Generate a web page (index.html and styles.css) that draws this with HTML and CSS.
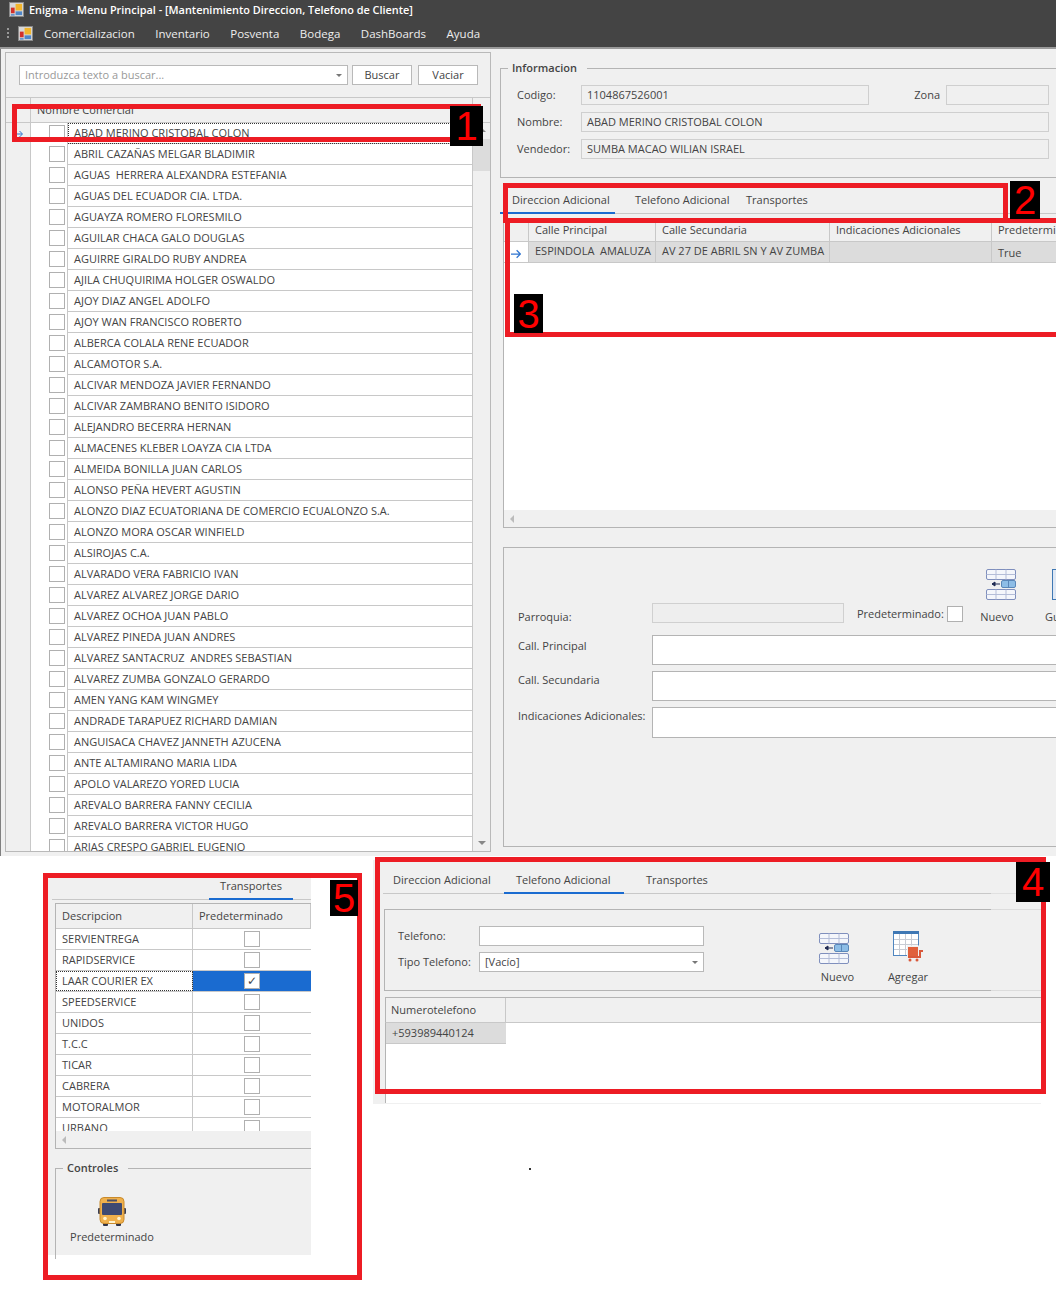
FILE: index.html
```html
<!DOCTYPE html>
<html lang="es">
<head>
  <meta charset="UTF-8">
  <title>Enigma - Menu Principal</title>
  <link rel="stylesheet" href="styles.css">
</head>
<body>
  <svg class="sprites" width="0" height="0">
    <defs>
      <symbol id="logo" viewBox="0 0 16 16">
        <rect x="0.5" y="0.5" width="15" height="15" fill="#d8d8d8" stroke="#8a8a8a"/>
        <rect x="2" y="6" width="4" height="6" fill="#d2302a"/>
        <rect x="7" y="2" width="7" height="7" fill="#f2b52c"/>
        <rect x="7" y="10" width="7" height="4" fill="#4f86c8"/>
        <rect x="2" y="13" width="4" height="1.5" fill="#4f86c8"/>
      </symbol>
      <symbol id="nuevo" viewBox="0 0 30 31">
        <g fill="#f4f6fb" stroke="#7f8fbd">
          <rect x="0.5" y="0.5" width="29" height="10" rx="1.5"/>
          <rect x="0.5" y="20.5" width="29" height="10" rx="1.5"/>
          <path d="M0.5 5.5h29M10 0.5v10M20 0.5v10M0.5 25.5h29M10 20.5v10M20 20.5v10" fill="none" stroke="#b4bdd8"/>
        </g>
        <rect x="15.5" y="11.5" width="14" height="7" rx="1.5" fill="#8dbde6" stroke="#5b87b8"/>
        <path d="M22.5 11.5v7" stroke="#5b87b8"/>
        <path d="M14 15h-8M9 13l-3 2 3 2z" fill="#1f2b52" stroke="#1f2b52"/>
      </symbol>
      <symbol id="agregar" viewBox="0 0 30 31">
        <rect x="0.5" y="1.5" width="25" height="23" fill="#fff" stroke="#4f86c0"/>
        <rect x="0" y="0" width="26" height="3" fill="#3f78b4"/>
        <path d="M6.5 3v21M12.5 3v21M18.5 3v21M1 8.500h24M1 13.500h24M1 18.500h24" stroke="#c8ccd4" fill="none"/>
        <rect x="14" y="14.500" width="13" height="11" fill="#f0f0f0"/>
        <rect x="15" y="16" width="10" height="9" fill="#e0603c"/>
        <path d="M15 26h12v-6h3" fill="none" stroke="#d9583a" stroke-width="2"/>
        <circle cx="17" cy="29" r="1.500" fill="#d9583a"/>
        <circle cx="24" cy="29" r="1.500" fill="#d9583a"/>
      </symbol>
      <symbol id="bus" viewBox="0 0 28 29">
        <rect x="0" y="11" width="3" height="6" rx="1" fill="#3a3f55"/>
        <rect x="25" y="11" width="3" height="6" rx="1" fill="#3a3f55"/>
        <rect x="5" y="24" width="5" height="5" rx="1" fill="#2f3346"/>
        <rect x="18" y="24" width="5" height="5" rx="1" fill="#2f3346"/>
        <rect x="2" y="0.500" width="24" height="26" rx="4" fill="#efb04c" stroke="#c98a2c"/>
        <rect x="9" y="2.500" width="10" height="2" fill="#4a4f66"/>
        <rect x="4" y="6" width="20" height="12" rx="1" fill="#3e4a72"/>
        <circle cx="7" cy="21.500" r="1.800" fill="#fff3cf"/>
        <circle cx="21" cy="21.500" r="1.800" fill="#fff3cf"/>
        <rect x="11" y="24" width="6" height="2" fill="#fff3cf"/>
      </symbol>
      <symbol id="arrow" viewBox="0 0 8 8">
        <path d="M0 4h7M4.500 1l3 3-3 3" fill="none" stroke="#2f74d0"/>
      </symbol>
    </defs>
  </svg>

  <div class="app">
    <div class="titlebar">
      <svg class="logo"><use href="#logo"/></svg>
      <span>Enigma - Menu Principal - [Mantenimiento Direccion, Telefono de Cliente]</span>
    </div>
    <div class="menubar">
      <span class="grip"></span>
      <svg class="logo"><use href="#logo"/></svg>
      <nav class="menu">
        <span>Comercializacion</span>
        <span>Inventario</span>
        <span>Posventa</span>
        <span>Bodega</span>
        <span>DashBoards</span>
        <span>Ayuda</span>
      </nav>
    </div>

    <div class="workspace">
      <section class="left-panel">
        <div class="search-row">
          <div class="combo search-combo"><span class="placeholder">Introduzca texto a buscar...</span><i class="caret"></i></div>
          <button class="btn btn-buscar">Buscar</button>
          <button class="btn">Vaciar</button>
        </div>
        <div class="list-head">
          <div class="list-head-marker"></div>
          <div class="list-head-name">Nombre Comercial</div>
        </div>
        <div class="list-body">
          <div class="list-rows">
            <div class="list-row is-current"><div class="marker"><svg class="arrow"><use href="#arrow"/></svg></div><div class="check-cell"><i class="check"></i></div><div class="name">ABAD MERINO CRISTOBAL COLON</div></div>
            <div class="list-row"><div class="marker"></div><div class="check-cell"><i class="check"></i></div><div class="name">ABRIL CAZAÑAS MELGAR BLADIMIR</div></div>
            <div class="list-row"><div class="marker"></div><div class="check-cell"><i class="check"></i></div><div class="name">AGUAS&nbsp; HERRERA ALEXANDRA ESTEFANIA</div></div>
            <div class="list-row"><div class="marker"></div><div class="check-cell"><i class="check"></i></div><div class="name">AGUAS DEL ECUADOR CIA. LTDA.</div></div>
            <div class="list-row"><div class="marker"></div><div class="check-cell"><i class="check"></i></div><div class="name">AGUAYZA ROMERO FLORESMILO</div></div>
            <div class="list-row"><div class="marker"></div><div class="check-cell"><i class="check"></i></div><div class="name">AGUILAR CHACA GALO DOUGLAS</div></div>
            <div class="list-row"><div class="marker"></div><div class="check-cell"><i class="check"></i></div><div class="name">AGUIRRE GIRALDO RUBY ANDREA</div></div>
            <div class="list-row"><div class="marker"></div><div class="check-cell"><i class="check"></i></div><div class="name">AJILA CHUQUIRIMA HOLGER OSWALDO</div></div>
            <div class="list-row"><div class="marker"></div><div class="check-cell"><i class="check"></i></div><div class="name">AJOY DIAZ ANGEL ADOLFO</div></div>
            <div class="list-row"><div class="marker"></div><div class="check-cell"><i class="check"></i></div><div class="name">AJOY WAN FRANCISCO ROBERTO</div></div>
            <div class="list-row"><div class="marker"></div><div class="check-cell"><i class="check"></i></div><div class="name">ALBERCA COLALA RENE ECUADOR</div></div>
            <div class="list-row"><div class="marker"></div><div class="check-cell"><i class="check"></i></div><div class="name">ALCAMOTOR S.A.</div></div>
            <div class="list-row"><div class="marker"></div><div class="check-cell"><i class="check"></i></div><div class="name">ALCIVAR MENDOZA JAVIER FERNANDO</div></div>
            <div class="list-row"><div class="marker"></div><div class="check-cell"><i class="check"></i></div><div class="name">ALCIVAR ZAMBRANO BENITO ISIDORO</div></div>
            <div class="list-row"><div class="marker"></div><div class="check-cell"><i class="check"></i></div><div class="name">ALEJANDRO BECERRA HERNAN</div></div>
            <div class="list-row"><div class="marker"></div><div class="check-cell"><i class="check"></i></div><div class="name">ALMACENES KLEBER LOAYZA CIA LTDA</div></div>
            <div class="list-row"><div class="marker"></div><div class="check-cell"><i class="check"></i></div><div class="name">ALMEIDA BONILLA JUAN CARLOS</div></div>
            <div class="list-row"><div class="marker"></div><div class="check-cell"><i class="check"></i></div><div class="name">ALONSO PEÑA HEVERT AGUSTIN</div></div>
            <div class="list-row"><div class="marker"></div><div class="check-cell"><i class="check"></i></div><div class="name">ALONZO DIAZ ECUATORIANA DE COMERCIO ECUALONZO S.A.</div></div>
            <div class="list-row"><div class="marker"></div><div class="check-cell"><i class="check"></i></div><div class="name">ALONZO MORA OSCAR WINFIELD</div></div>
            <div class="list-row"><div class="marker"></div><div class="check-cell"><i class="check"></i></div><div class="name">ALSIROJAS C.A.</div></div>
            <div class="list-row"><div class="marker"></div><div class="check-cell"><i class="check"></i></div><div class="name">ALVARADO VERA FABRICIO IVAN</div></div>
            <div class="list-row"><div class="marker"></div><div class="check-cell"><i class="check"></i></div><div class="name">ALVAREZ ALVAREZ JORGE DARIO</div></div>
            <div class="list-row"><div class="marker"></div><div class="check-cell"><i class="check"></i></div><div class="name">ALVAREZ OCHOA JUAN PABLO</div></div>
            <div class="list-row"><div class="marker"></div><div class="check-cell"><i class="check"></i></div><div class="name">ALVAREZ PINEDA JUAN ANDRES</div></div>
            <div class="list-row"><div class="marker"></div><div class="check-cell"><i class="check"></i></div><div class="name">ALVAREZ SANTACRUZ&nbsp; ANDRES SEBASTIAN</div></div>
            <div class="list-row"><div class="marker"></div><div class="check-cell"><i class="check"></i></div><div class="name">ALVAREZ ZUMBA GONZALO GERARDO</div></div>
            <div class="list-row"><div class="marker"></div><div class="check-cell"><i class="check"></i></div><div class="name">AMEN YANG KAM WINGMEY</div></div>
            <div class="list-row"><div class="marker"></div><div class="check-cell"><i class="check"></i></div><div class="name">ANDRADE TARAPUEZ RICHARD DAMIAN</div></div>
            <div class="list-row"><div class="marker"></div><div class="check-cell"><i class="check"></i></div><div class="name">ANGUISACA CHAVEZ JANNETH AZUCENA</div></div>
            <div class="list-row"><div class="marker"></div><div class="check-cell"><i class="check"></i></div><div class="name">ANTE ALTAMIRANO MARIA LIDA</div></div>
            <div class="list-row"><div class="marker"></div><div class="check-cell"><i class="check"></i></div><div class="name">APOLO VALAREZO YORED LUCIA</div></div>
            <div class="list-row"><div class="marker"></div><div class="check-cell"><i class="check"></i></div><div class="name">AREVALO BARRERA FANNY CECILIA</div></div>
            <div class="list-row"><div class="marker"></div><div class="check-cell"><i class="check"></i></div><div class="name">AREVALO BARRERA VICTOR HUGO</div></div>
            <div class="list-row"><div class="marker"></div><div class="check-cell"><i class="check"></i></div><div class="name">ARIAS CRESPO GABRIEL EUGENIO</div></div>
          </div>
          <div class="vscroll">
            <i class="tri tri-up"></i>
            <div class="vscroll-thumb"></div>
            <i class="tri tri-down"></i>
          </div>
        </div>
      </section>

      <section class="right-panel">
        <fieldset class="info-group">
          <legend>Informacion</legend>
          <div class="info-row">
            <label>Codigo:</label>
            <div class="ro-field ro-codigo">1104867526001</div>
            <label class="zona-label">Zona</label>
            <div class="ro-field ro-zona"></div>
          </div>
          <div class="info-row">
            <label>Nombre:</label>
            <div class="ro-field ro-wide">ABAD MERINO CRISTOBAL COLON</div>
          </div>
          <div class="info-row">
            <label>Vendedor:</label>
            <div class="ro-field ro-wide">SUMBA MACAO WILIAN ISRAEL</div>
          </div>
        </fieldset>

        <div class="tabs">
          <span class="tab tab-dir is-active">Direccion Adicional</span>
          <span class="tab tab-tel">Telefono Adicional</span>
          <span class="tab tab-tra">Transportes</span>
        </div>

        <div class="dir-grid">
          <div class="dir-head">
            <div class="dir-corner"></div>
            <div class="dir-cell">Calle Principal</div>
            <div class="dir-cell">Calle Secundaria</div>
            <div class="dir-cell">Indicaciones Adicionales</div>
            <div class="dir-cell">Predeterminado</div>
          </div>
          <div class="dir-row">
            <div class="dir-corner"><svg class="arrow arrow-big"><use href="#arrow"/></svg></div>
            <div class="dir-cell">ESPINDOLA&nbsp; AMALUZA</div>
            <div class="dir-cell">AV 27 DE ABRIL SN Y AV ZUMBA</div>
            <div class="dir-cell"></div>
            <div class="dir-cell dir-true">True</div>
          </div>
          <div class="dir-blank"></div>
          <div class="hscroll"><i class="tri tri-left"></i></div>
        </div>

        <div class="edit-panel">
          <div class="edit-top">
            <label class="edit-label edit-parroquia">Parroquia:</label>
            <div class="disabled-field"></div>
            <label class="pred-label">Predeterminado:</label>
            <i class="check check-pred"></i>
            <div class="tool tool-nuevo">
              <svg class="tool-icon"><use href="#nuevo"/></svg>
              <span>Nuevo</span>
            </div>
            <div class="tool tool-guardar">
              <div class="guardar-icon"></div>
              <span>Guardar</span>
            </div>
          </div>
          <div class="edit-row">
            <label class="edit-label edit-label-low">Call. Principal</label>
            <div class="text-box"></div>
          </div>
          <div class="edit-row">
            <label class="edit-label">Call. Secundaria</label>
            <div class="text-box"></div>
          </div>
          <div class="edit-row">
            <label class="edit-label">Indicaciones Adicionales:</label>
            <div class="text-box text-box-tall"></div>
          </div>
        </div>
      </section>
    </div>
  </div>

  <!-- recorte: pestaña Transportes -->
  <section class="shot shot-transportes">
    <div class="small-tabs"><span class="small-tab">Transportes</span></div>
    <div class="tr-grid">
      <div class="tr-row tr-head"><div class="tr-name">Descripcion</div><div class="tr-check">Predeterminado</div></div>
      <div class="tr-row"><div class="tr-name">SERVIENTREGA</div><div class="tr-check"><i class="check"></i></div></div>
      <div class="tr-row"><div class="tr-name">RAPIDSERVICE</div><div class="tr-check"><i class="check"></i></div></div>
      <div class="tr-row is-selected"><div class="tr-name">LAAR COURIER EX</div><div class="tr-check"><i class="check is-checked">✓</i></div></div>
      <div class="tr-row"><div class="tr-name">SPEEDSERVICE</div><div class="tr-check"><i class="check"></i></div></div>
      <div class="tr-row"><div class="tr-name">UNIDOS</div><div class="tr-check"><i class="check"></i></div></div>
      <div class="tr-row"><div class="tr-name">T.C.C</div><div class="tr-check"><i class="check"></i></div></div>
      <div class="tr-row"><div class="tr-name">TICAR</div><div class="tr-check"><i class="check"></i></div></div>
      <div class="tr-row"><div class="tr-name">CABRERA</div><div class="tr-check"><i class="check"></i></div></div>
      <div class="tr-row"><div class="tr-name">MOTORALMOR</div><div class="tr-check"><i class="check"></i></div></div>
      <div class="tr-row"><div class="tr-name">URBANO</div><div class="tr-check"><i class="check"></i></div></div>
    </div>
    <div class="hscroll tr-scroll"><i class="tri tri-left"></i></div>
    <fieldset class="controls-group">
      <legend>Controles</legend>
      <div class="tool tool-bus">
        <svg class="bus-icon"><use href="#bus"/></svg>
        <span>Predeterminado</span>
      </div>
    </fieldset>
  </section>

  <!-- recorte: pestaña Telefono Adicional -->
  <section class="shot shot-telefono">
    <div class="tel-tabs">
      <span class="tab tel-tab-dir">Direccion Adicional</span>
      <span class="tab tel-tab-tel is-active">Telefono Adicional</span>
      <span class="tab tel-tab-tra">Transportes</span>
    </div>
    <div class="tel-group">
      <div class="tel-form">
        <label>Telefono:</label>
        <div class="text-input"></div>
        <label>Tipo Telefono:</label>
        <div class="combo"><span>[Vacío]</span><i class="caret"></i></div>
      </div>
      <div class="tel-tools">
        <div class="tool tel-nuevo"><svg class="tool-icon"><use href="#nuevo"/></svg><span>Nuevo</span></div>
        <div class="tool"><svg class="tool-icon"><use href="#agregar"/></svg><span>Agregar</span></div>
      </div>
    </div>
    <div class="tel-head"><div class="tel-col">Numerotelefono</div></div>
    <div class="tel-body">
      <div class="tel-cell">+593989440124</div>
    </div>
  </section>

  <!-- marcas rojas encima de la captura -->
  <div class="mark mark-1"></div>
  <div class="mark mark-2"></div>
  <div class="mark mark-3"></div>
  <div class="mark mark-4"></div>
  <div class="mark mark-5"></div>
  <div class="num num-1">1</div>
  <div class="num num-2">2</div>
  <div class="num num-3">3</div>
  <div class="num num-4">4</div>
  <div class="num num-5">5</div>
  <span class="stray-dot"></span>
</body>
</html>
```

FILE: styles.css
```css
* {
  box-sizing: border-box;
}
html, body {
  margin: 0;
  padding: 0;
}
body {
  position: relative;
  width: 1056px;
  height: 1300px;
  overflow: hidden;
  background: #fff;
  color: #444;
  font-family: "Open Sans", "Noto Sans", sans-serif;
  font-size: 11px;
}
.sprites {
  position: absolute;
}
label {
  display: block;
}

/* ventana principal */
.app {
  height: 856px;
  background: #f0f0f0;
  overflow: hidden;
}
.titlebar {
  height: 20px;
  display: flex;
  align-items: center;
  gap: 5px;
  padding: 0 0 1px 9px;
  background: #444;
  color: #fff;
  font-weight: 600;
  font-size: 10.9px;
}
.logo {
  width: 15px;
  height: 15px;
}
.menubar {
  height: 29px;
  display: flex;
  align-items: center;
  padding: 0 0 1px 7px;
  background: #444;
  border-bottom: 2px solid #9a9a9a;
  color: #eee;
  font-size: 11.5px;
}
.grip {
  width: 2px;
  height: 10px;
  margin-right: 9px;
  background: repeating-linear-gradient(#999 0 2px, transparent 2px 4px);
}
.menu {
  display: flex;
  gap: 20.5px;
  margin-left: 11px;
}
.workspace {
  display: flex;
  height: 807px;
  padding: 3px 0 0 4px;
  border-left: 1px solid #808080;
}

/* lista de clientes */
.left-panel {
  width: 486px;
  height: 800px;
  flex: none;
  display: flex;
  flex-direction: column;
  border: 1px solid #b9b9b9;
}
.search-row {
  display: flex;
  gap: 4px;
  padding: 12px 0 12px 13px;
  border-bottom: 1px solid #c8c8c8;
}
.combo {
  position: relative;
  height: 20px;
  padding-left: 5px;
  line-height: 18px;
  background: #fff;
  border: 1px solid #b9b9b9;
}
.search-combo {
  width: 329px;
}
.placeholder {
  color: #999;
}
.caret {
  position: absolute;
  right: 5px;
  top: 8px;
  border: 3px solid transparent;
  border-top: 3px solid #777;
  border-bottom: 0;
}
.btn {
  width: 60px;
  height: 20px;
  padding: 0 0 1px;
  background: #fff;
  border: 1px solid #b9b9b9;
  color: #444;
  font: inherit;
}
.btn + .btn {
  margin-left: 2px;
}
.list-head {
  display: flex;
  height: 25px;
  flex: none;
  border-bottom: 1px solid #c8c8c8;
}
.list-head-marker {
  width: 25px;
  border-right: 1px solid #c8c8c8;
}
.list-head-name {
  width: 442px;
  padding: 4px 0 0 6px;
  border-right: 1px solid #c8c8c8;
}
.list-body {
  display: flex;
  flex: 1;
  min-height: 0;
  overflow: hidden;
}
.list-rows {
  width: 467px;
  flex: none;
  background: #fff;
}
.list-row {
  display: flex;
  height: 21px;
}
.marker {
  width: 25px;
  flex: none;
  padding: 7px 0 0 9px;
  background: #f0f0f0;
  border-right: 1px solid #c8c8c8;
}
.arrow {
  display: block;
  width: 8px;
  height: 8px;
}
.check-cell {
  width: 37px;
  flex: none;
  padding: 2px 0 0 18px;
  border-right: 1px solid #c8c8c8;
}
.check {
  display: block;
  width: 16px;
  height: 16px;
  background: #fff;
  border: 1px solid #b0b0b0;
  font-style: normal;
}
.name {
  flex: 1;
  padding-left: 6px;
  line-height: 20px;
  border-bottom: 1px solid #c8c8c8;
  border-right: 1px solid #c8c8c8;
  white-space: nowrap;
}
.is-current .name {
  outline: 1px dotted #333;
  outline-offset: -1px;
}
.vscroll {
  flex: 1;
  position: relative;
  display: flex;
  flex-direction: column;
  align-items: center;
}
.vscroll-thumb {
  align-self: stretch;
  height: 32px;
  margin-top: 7px;
  background: #dcdcdc;
}
.tri {
  display: block;
  width: 0;
  height: 0;
  border: 4px solid transparent;
}
.tri-up {
  margin-top: 5px;
  border-bottom-color: #888;
  border-top: 0;
}
.tri-down {
  margin-top: auto;
  margin-bottom: 6px;
  border-top-color: #888;
  border-bottom: 0;
}
.tri-left {
  border-right-color: #bbb;
  border-left: 0;
}

/* panel derecho */
.right-panel {
  width: 640px;
  flex: none;
  margin-left: 9px;
}
fieldset {
  margin: 0;
  border: 0;
}
legend {
  padding: 0 10px 0 4px;
  font-weight: 600;
  font-size: 11px;
  line-height: 16px;
}
.info-group {
  height: 118px;
  margin-top: 8px;
  padding: 9px 0 0 16px;
  border: 1px solid #b4b4b4;
  border-right: 0;
}
.info-group legend {
  margin-left: -9px;
}
.info-row {
  display: flex;
  align-items: center;
  height: 20px;
  margin-bottom: 7px;
}
.info-row label {
  width: 64px;
  flex: none;
  padding-bottom: 2px;
}
.ro-field {
  height: 20px;
  padding-left: 5px;
  line-height: 18px;
  border: 1px solid #cfcfcf;
}
.ro-codigo {
  width: 288px;
}
.info-row .zona-label {
  width: 77px;
  text-align: right;
  padding-right: 6px;
}
.ro-zona {
  width: 103px;
}
.ro-wide {
  width: 468px;
}
.tabs {
  display: flex;
  height: 35px;
  margin-top: 1px;
  padding-top: 13px;
  border-bottom: 1px solid #c8c8c8;
  position: relative;
}
.tab {
  position: relative;
  white-space: nowrap;
  font-size: 11px;
}
.is-active::after {
  content: "";
  position: absolute;
  bottom: -1px;
  height: 2px;
  background: #1a6bd0;
}
.tab-dir {
  padding-left: 12px;
  width: 135px;
}
.tab-dir::after {
  left: 0;
  width: 115px;
}
.tab-tel {
  width: 111px;
}
.dir-grid {
  height: 308px;
  margin: 6px 0 0 3px;
  display: flex;
  flex-direction: column;
  background: #fff;
  border-left: 1px solid #b4b4b4;
  border-bottom: 1px solid #b4b4b4;
  overflow: hidden;
}
.dir-head, .dir-row {
  display: grid;
  grid-template-columns: 25px 127px 174px 162px 110px;
  flex: none;
}
.dir-head {
  height: 22px;
  border-bottom: 1px solid #c8c8c8;
  background: #f0f0f0;
}
.dir-row {
  height: 21px;
  border-bottom: 1px solid #c8c8c8;
  background: #dcdcdc;
}
.dir-corner {
  padding: 7px 0 0 7px;
  background: #f0f0f0;
  border-right: 1px solid #c8c8c8;
}
.dir-row .dir-corner {
  background: #fff;
}
.arrow-big {
  width: 10px;
  height: 10px;
}
.dir-cell {
  padding-left: 6px;
  line-height: 20px;
  border-right: 1px solid #c8c8c8;
  white-space: nowrap;
  overflow: hidden;
}
.dir-row .dir-cell {
  line-height: 18px;
}
.dir-row .dir-true {
  line-height: 22px;
}
.dir-blank {
  flex: 1;
}
.hscroll {
  flex: none;
  height: 17px;
  padding: 5px 0 0 6px;
  background: #f0f0f0;
}
.edit-panel {
  height: 300px;
  margin: 19px 0 0 3px;
  padding: 21px 0 0 14px;
  border: 1px solid #b4b4b4;
  border-right: 0;
}
.edit-top {
  display: flex;
  align-items: flex-end;
  height: 54px;
  margin-bottom: 12px;
}
.edit-label {
  width: 134px;
  flex: none;
}
.edit-parroquia {
  margin-bottom: -1px;
}
.disabled-field {
  width: 192px;
  height: 20px;
  flex: none;
  margin-right: 13px;
  background: #eee;
  border: 1px solid #d0d0d0;
}
.pred-label {
  width: 90px;
  flex: none;
  padding-bottom: 2px;
}
.check-pred {
  flex: none;
  margin-bottom: 1px;
}
.tool {
  display: flex;
  flex-direction: column;
  align-items: center;
  gap: 9px;
  white-space: nowrap;
}
.tool-icon {
  width: 30px;
  height: 31px;
}
.tool-nuevo {
  width: 60px;
  margin: 0 0 -1px 4px;
}
.tool-nuevo .tool-icon {
  margin-left: 8px;
}
.tool-guardar {
  margin: 0 0 -1px 18px;
  align-items: flex-start;
}
.guardar-icon {
  width: 30px;
  height: 31px;
  margin-left: 7px;
  background: #dfe8f4;
  border: 1px solid #3f78b4;
}
.edit-row {
  display: flex;
  margin-bottom: 6px;
}
.edit-row .edit-label {
  padding-top: 1px;
}
.edit-row .edit-label-low {
  padding-top: 3px;
}
.text-box {
  width: 420px;
  height: 30px;
  background: #fff;
  border: 1px solid #b4b4b4;
  border-right: 0;
}
.text-box-tall {
  height: 31px;
}

/* recortes pegados en el lienzo */
.shot {
  position: absolute;
  background: #f0f0f0;
}
.shot-transportes {
  left: 48px;
  top: 878px;
  width: 263px;
  height: 377px;
}
.small-tabs {
  height: 22px;
  margin-left: 4px;
  border-bottom: 1px solid #c8c8c8;
  padding-left: 157px;
}
.small-tab {
  display: block;
  position: relative;
  width: 84px;
  height: 21px;
  text-align: center;
  line-height: 16px;
}
.small-tab::after {
  content: "";
  position: absolute;
  left: 0;
  right: 0;
  bottom: -1px;
  height: 2px;
  background: #1a6bd0;
}
.tr-grid {
  height: 228px;
  margin: 3px 0 0 7px;
  border-left: 1px solid #b4b4b4;
  border-top: 1px solid #b4b4b4;
  overflow: hidden;
  background: #fff;
}
.tr-row {
  display: grid;
  grid-template-columns: 137px 118px;
  height: 21px;
  border-bottom: 1px solid #c8c8c8;
  line-height: 20px;
}
.tr-head {
  height: 25px;
  line-height: 24px;
  background: #f0f0f0;
}
.tr-name {
  padding-left: 6px;
  border-right: 1px solid #c8c8c8;
}
.tr-check {
  display: flex;
  justify-content: center;
  padding-top: 2px;
}
.tr-head .tr-check {
  padding: 0 0 0 6px;
  justify-content: flex-start;
  border-right: 1px solid #c8c8c8;
}
.is-selected .tr-name {
  outline: 1px dotted #333;
  outline-offset: -1px;
}
.is-selected .tr-check {
  background: #1a6bd0;
}
.is-checked {
  text-align: center;
  line-height: 14px;
  font-size: 12px;
  font-family: "DejaVu Sans", sans-serif;
}
.tr-scroll {
  margin-left: 7px;
  border-left: 1px solid #b4b4b4;
  border-bottom: 1px solid #b4b4b4;
  height: 18px;
}
.controls-group {
  height: 99px;
  margin: 11px 0 0 7px;
  padding: 21px 0 0 14px;
  border-top: 1px solid #b4b4b4;
  border-left: 1px solid #b4b4b4;
}
.controls-group legend {
  margin-left: -7px;
}
.tool-bus {
  width: 84px;
  gap: 3px;
}
.bus-icon {
  width: 28px;
  height: 29px;
}
.shot-telefono {
  left: 373px;
  top: 860px;
  width: 668px;
  height: 244px;
}
.tel-tabs {
  display: flex;
  height: 34px;
  margin-left: 10px;
  padding-top: 12px;
  border-bottom: 1px solid transparent;
  border-image: linear-gradient(to right, #c8c8c8 607px, #e0e0e0 607px) 1;
}
.tel-tab-dir {
  padding-left: 10px;
  width: 121px;
}
.tel-tab-tel {
  width: 120px;
  padding-left: 12px;
}
.tel-tab-tel::after {
  left: 0;
  width: 120px;
}
.tel-tab-tra {
  padding-left: 22px;
}
.tel-group {
  display: flex;
  height: 82px;
  margin: 15px 0 0 11px;
  padding: 16px 0 0 13px;
  border-left: 1px solid #b4b4b4;
  border-top: 1px solid transparent;
  border-bottom: 1px solid transparent;
  border-image: linear-gradient(to right, #b4b4b4 606px, #dcdcdc 606px) 1;
}
.tel-form {
  display: grid;
  grid-template-columns: 81px 225px;
  grid-auto-rows: 20px;
  row-gap: 6px;
  align-items: center;
}
.tel-form label {
  padding-bottom: 2px;
}
.text-input {
  height: 20px;
  background: #fff;
  border: 1px solid #b9b9b9;
}
.tel-tools {
  display: flex;
  gap: 14px;
  margin: 5px 0 0 100px;
}
.tel-tools .tool {
  width: 60px;
  gap: 7px;
}
.tel-nuevo .tool-icon {
  margin: 2px 0 -2px;
}
.tel-nuevo span {
  margin-left: 7px;
}
.tel-head {
  height: 26px;
  margin: 6px 0 0 12px;
  border-top: 1px solid #b4b4b4;
  border-left: 1px solid #b4b4b4;
  border-bottom: 1px solid #c8c8c8;
}
.tel-col {
  width: 120px;
  height: 24px;
  padding-left: 5px;
  line-height: 24px;
  border-right: 1px solid #c8c8c8;
}
.tel-body {
  height: 80px;
  margin-left: 12px;
  background: #fff;
  border-left: 1px solid #b4b4b4;
}
.tel-cell {
  width: 120px;
  height: 21px;
  padding-left: 6px;
  line-height: 20px;
  background: #dcdcdc;
  border-bottom: 1px solid #c8c8c8;
}

/* marcas */
.mark {
  position: absolute;
  border: 5px solid #ed1c24;
}
.mark-1 { left: 12px; top: 104px; width: 469px; height: 38px; }
.mark-2 { left: 503px; top: 183px; width: 505px; height: 40px; }
.mark-3 { left: 505px; top: 218px; width: 560px; height: 119px; }
.mark-4 { left: 375px; top: 857px; width: 671px; height: 237px; }
.mark-5 { left: 43px; top: 873px; width: 319px; height: 407px; }
.num {
  position: absolute;
  display: flex;
  align-items: center;
  justify-content: center;
  background: #000;
  color: #f00;
  font-family: "Liberation Sans", sans-serif;
  font-size: 40px;
  line-height: 1;
}
.num-1 { left: 450px; top: 106px; width: 33px; height: 40px; }
.num-2 { left: 1010px; top: 181px; width: 30px; height: 38px; }
.num-3 { left: 514px; top: 294px; width: 29px; height: 39px; }
.num-4 { left: 1016px; top: 862px; width: 34px; height: 40px; }
.num-5 { left: 330px; top: 880px; width: 28px; height: 36px; }
.stray-dot {
  position: absolute;
  left: 529px;
  top: 1168px;
  width: 2px;
  height: 2px;
  background: #333;
}
```
